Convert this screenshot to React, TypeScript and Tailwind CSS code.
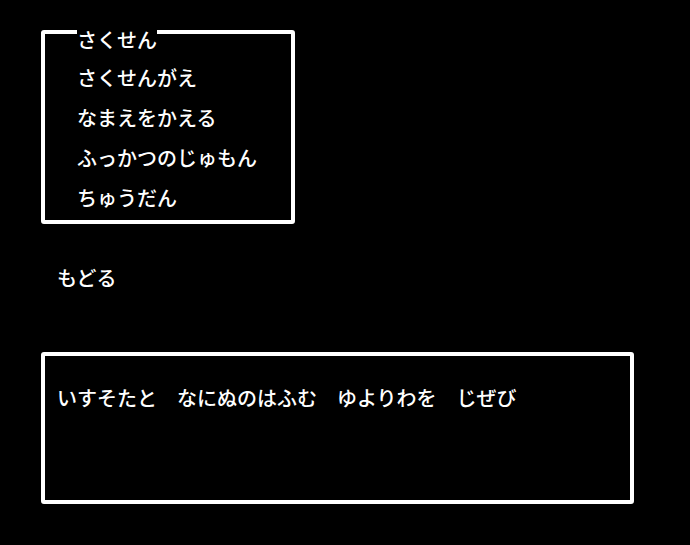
import React from 'react';

const menuItems = ['さくせんがえ', 'なまえをかえる', 'ふっかつのじゅもん', 'ちゅうだん'];

export default function App() {
    return (
        <div
            className="w-[690px] h-[545px] bg-black text-white overflow-hidden"
            style={{ fontFamily: '"Noto Sans CJK JP", "Noto Sans", sans-serif' }}
        >
            {/* Strategy menu */}
            <div className="relative ml-[41px] mt-[30px] w-[254px] h-[194px] border-4 border-white rounded-[3px] pl-[32px] pt-[24px]">
                <span className="absolute left-[32px] top-[-4px] bg-black text-[20px] leading-[20px] font-medium">
                    さくせん
                </span>
                <ul>
                    {menuItems.map((item) => (
                        <li key={item} className="text-[20px] leading-[40px] font-medium whitespace-nowrap">
                            {item}
                        </li>
                    ))}
                </ul>
            </div>

            {/* Back */}
            <p className="ml-[57px] mt-[44px] text-[20px] leading-[20px] font-medium">もどる</p>

            {/* Message window */}
            <div className="ml-[41px] mt-[64px] w-[593px] h-[152px] border-4 border-white rounded-[3px] pl-[12px] pt-[32px]">
                <p className="text-[20px] leading-[20px] font-medium whitespace-nowrap">
                    いすそたと　なにぬのはふむ　ゆよりわを　じぜび
                </p>
            </div>
        </div>
    );
}
